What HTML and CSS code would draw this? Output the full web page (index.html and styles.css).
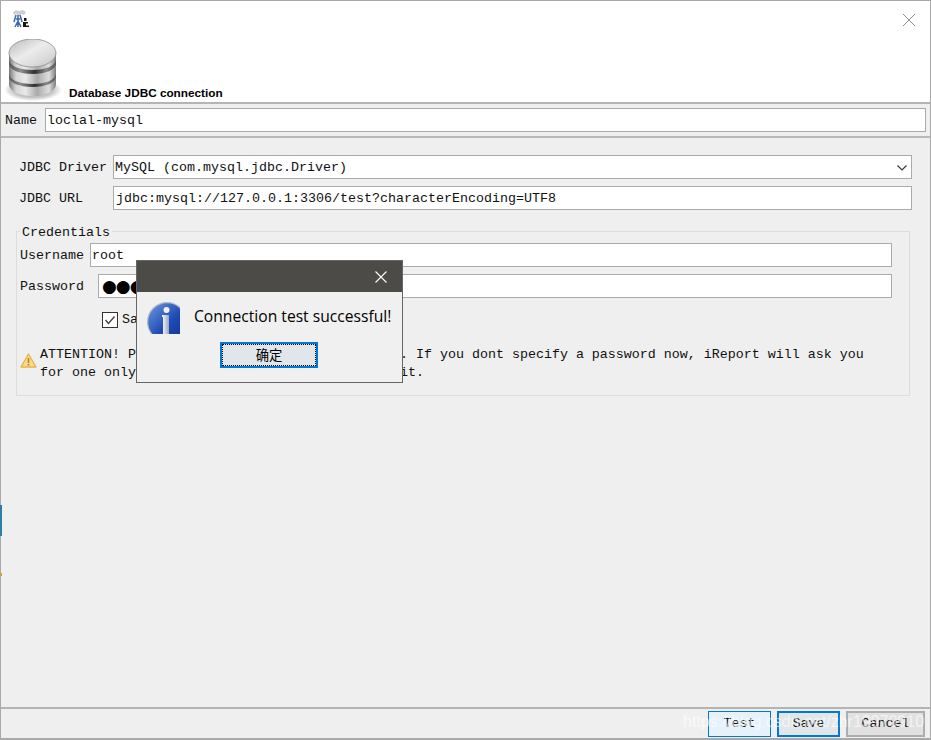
FILE: index.html
```html
<!DOCTYPE html>
<html lang="en">
<head>
<meta charset="utf-8">
<title>Database JDBC connection</title>
<link rel="stylesheet" href="styles.css">
</head>
<body>
<div class="window">
  <header class="header">
    <div class="title-row">
      <svg class="app-icon" width="17" height="18" viewBox="0 0 17 18">
        <path d="M1 2l3-2 3 1 4-1 3 2-2 3-3-1-2 2-3-2-2 1z" fill="#cfcfcf"/>
        <path d="M6 5v12M4 5l-2 7M8 5l2 7M4 9h4M6 11l-3 6M6 11l3 6" stroke="#3c68ad" stroke-width="1.5" fill="none"/>
        <path d="M12 8h2.500v3H12zM11 12h5v1.500h-2v2h3V17h-6z" fill="#161616"/>
      </svg>
      <svg class="close-icon" width="14" height="14" viewBox="0 0 14 14"><path d="M1 1l12 12M13 1L1 13" stroke="#8f8f8f" stroke-width="1" fill="none"/></svg>
    </div>
    <div class="banner">
      <svg class="db-icon" width="65" height="63" viewBox="0 0 65 63">
        <defs>
          <linearGradient id="side" x1="0" x2="1" y1="0" y2="0">
            <stop offset="0" stop-color="#777"/><stop offset="0.15" stop-color="#d6d6d6"/><stop offset="0.35" stop-color="#e9e9e9"/><stop offset="0.6" stop-color="#a9a9a9"/><stop offset="0.85" stop-color="#dedede"/><stop offset="1" stop-color="#7c7c7c"/>
          </linearGradient>
          <linearGradient id="gap" x1="0" x2="1" y1="0" y2="0">
            <stop offset="0" stop-color="#555"/><stop offset="0.25" stop-color="#8e8e8e"/><stop offset="0.55" stop-color="#2e2e33"/><stop offset="0.8" stop-color="#8a8a8a"/><stop offset="1" stop-color="#555"/>
          </linearGradient>
          <linearGradient id="top" x1="0" x2="1" y1="0" y2="1">
            <stop offset="0" stop-color="#b9b9b9"/><stop offset="0.45" stop-color="#ececec"/><stop offset="0.7" stop-color="#dcdcdc"/><stop offset="1" stop-color="#c2c2c2"/>
          </linearGradient>
          <radialGradient id="shadow"><stop offset="0" stop-color="#8a8a8a"/><stop offset="0.7" stop-color="#c8c8c8"/><stop offset="1" stop-color="#fff"/></radialGradient>
        </defs>
        <ellipse cx="29" cy="52" rx="29" ry="11" fill="url(#shadow)"/>
        <path d="M5 14v32c0 7 10.500 12 23.500 12S52 53 52 46V14z" fill="url(#side)"/>
        <path d="M5 21c0 7 10.500 11 23.500 11S52 28 52 21v4c0 7-10.500 11-23.500 11S5 32 5 25z" fill="url(#gap)"/>
        <path d="M5 35c0 7 10.500 11 23.500 11S52 42 52 35v3c0 7-10.500 11-23.500 11S5 45 5 38z" fill="url(#gap)"/>
        <ellipse cx="28.500" cy="15" rx="23.500" ry="14" fill="url(#top)" stroke="#8d8d8d" stroke-width="0.8"/>
      </svg>
      <span class="banner-title">Database JDBC connection</span>
    </div>
  </header>

  <div class="name-row">
    <label class="mono name-label">Name</label>
    <div class="field mono name-field">loclal-mysql</div>
  </div>

  <main class="content">
    <div class="form-row">
      <label class="mono driver-label">JDBC Driver</label>
      <div class="field mono select-field">
        <span>MySQL (com.mysql.jdbc.Driver)</span>
        <svg width="10" height="6" viewBox="0 0 10 6"><path d="M0.500 0.500l4.500 4.500 4.500-4.500" stroke="#333" stroke-width="1.100" fill="none"/></svg>
      </div>
    </div>
    <div class="form-row url-row">
      <label class="mono driver-label">JDBC URL</label>
      <div class="field mono url-field">jdbc:mysql://127.0.0.1:3306/test?characterEncoding=UTF8</div>
    </div>

    <section class="credentials">
      <span class="mono legend">Credentials</span>
      <div class="cred-row">
        <label class="mono user-label">Username</label>
        <div class="field mono">root</div>
      </div>
      <div class="cred-row pass-row">
        <label class="mono pass-label">Password</label>
        <div class="field dots">●●●●●</div>
      </div>
      <div class="check-row">
        <span class="checkbox">
          <svg width="14" height="14" viewBox="0 0 14 14"><path d="M2.500 7l3 3.500L11.500 3.500" stroke="#444" stroke-width="1.400" fill="none"/></svg>
        </span>
        <span class="mono">Save password</span>
      </div>
      <div class="warning">
        <svg class="warn-icon" width="17" height="15" viewBox="0 0 17 15">
          <path d="M8.500 1L16 14H1z" fill="#f8dc86" stroke="#e8b24a" stroke-width="1.300" stroke-linejoin="round"/>
          <path d="M8.500 5v5" stroke="#b0842a" stroke-width="1.600"/>
          <path d="M7.700 11h1.600v1.600H7.700z" fill="#b0842a"/>
        </svg>
        <p class="mono warn-text">ATTENTION! Passwords are stored in clear text. If you dont specify a password now, iReport will ask you<br>for one only when required and will not save it.</p>
      </div>
    </section>
  </main>

  <footer class="footer">
    <button class="btn mono btn-test">Test</button>
    <button class="btn mono btn-save">Save</button>
    <button class="btn mono btn-cancel">Cancel</button>
  </footer>
</div>

<span class="edge edge-blue"></span>
<span class="edge edge-orange"></span>

<div class="dialog">
  <div class="dialog-bar">
    <svg width="12" height="12" viewBox="0 0 12 12"><path d="M0.500 0.500l11 11M11.500 0.500l-11 11" stroke="#fff" stroke-width="1.100" fill="none"/></svg>
  </div>
  <div class="dialog-body">
    <div class="dialog-msg">
      <svg class="info-icon" width="33" height="32" viewBox="0 0 33 32">
        <defs>
          <linearGradient id="blue" x1="0" x2="1" y1="0" y2="1">
            <stop offset="0" stop-color="#6f9be0"/><stop offset="0.55" stop-color="#1f49b4"/><stop offset="1" stop-color="#10308f"/>
          </linearGradient>
          <linearGradient id="ibar" x1="0" x2="1" y1="0" y2="0">
            <stop offset="0" stop-color="#fff"/><stop offset="1" stop-color="#98a4c2"/>
          </linearGradient>
        </defs>
        <circle cx="20" cy="20" r="19.400" fill="url(#blue)" stroke="#b4bac6" stroke-width="1.200"/>
        <circle cx="19.500" cy="8" r="3" fill="#eef1f8"/>
        <path d="M15 13h7v19h-6V15h-1z" fill="url(#ibar)"/>
      </svg>
      <span class="dialog-text">Connection test successful!</span>
    </div>
    <button class="ok-btn"><span class="ok-inner">确定</span></button>
  </div>
</div>

<div class="watermark">https://blog.csdn.net/zhr19970910</div>
</body>
</html>
```
FILE: styles.css
```css
* { box-sizing: border-box; }
html, body { margin: 0; height: 100%; overflow: hidden; }
body { background: #efefef; color: #000; font-family: "Liberation Sans", sans-serif; }
.mono { font-family: "Liberation Mono", monospace; font-size: 13.33px; line-height: 16px; color: #111; }

.window { height: 740px; display: flex; flex-direction: column; border: 1px solid #a9a9a9; border-width: 1px 1px 2px 1px; background: #efefef; }

.header { height: 103px; background: #fff; border-bottom: 2px solid #b4b4b4; display: flex; flex-direction: column; flex: none; }
.title-row { height: 38px; display: flex; justify-content: space-between; padding: 9px 14px 0 11px; }
.app-icon { display: block; }
.close-icon { display: block; margin-top: 3px; }
.banner { display: flex; align-items: flex-end; height: 62px; padding-left: 3px; overflow: hidden; }
.db-icon { display: block; flex: none; }
.banner-title { font-size: 11.77px; font-weight: bold; line-height: 14px; margin-bottom: 1px; }

.name-row { height: 34px; flex: none; display: flex; align-items: center; padding: 0 4px; gap: 8px; border-bottom: 2px solid #b9b9b9; }
.name-label { flex: none; padding-top: 2px; }

.field { height: 24px; background: #fff; border: 1px solid #ababab; padding: 2px 1px 0; display: flex; align-items: center; flex: 1; min-width: 0; white-space: nowrap; overflow: hidden; }
.url-field { padding-left: 2px; }

.content { flex: 1; padding: 17px 18px 0 15px; }
.form-row { display: flex; align-items: center; padding-left: 3px; }
.driver-label { width: 94px; flex: none; padding-top: 2px; }
.url-row { margin-top: 7px; }
.select-field { justify-content: space-between; padding-right: 4px; }

.credentials { position: relative; margin: 21px 2px 0 0; height: 165px; border: 1px solid #ddd; padding: 11px 17px 0 3px; }
.legend { position: absolute; top: -8px; left: 3px; background: #efefef; padding: 1px 2px 0; }
.cred-row { display: flex; align-items: center; }
.user-label { width: 70px; flex: none; padding-top: 2px; }
.pass-label { width: 78px; flex: none; padding-top: 2px; }
.pass-row { margin-top: 7px; }
.dots { font-family: "DejaVu Sans", sans-serif; font-size: 17px; letter-spacing: -1px; padding: 0 1px 0 3px; }

.check-row { display: flex; align-items: center; gap: 4px; margin: 14px 0 0 82px; }
.checkbox { width: 16px; height: 16px; border: 1px solid #333; background: #fff; display: flex; align-items: center; justify-content: center; flex: none; }

.warning { display: flex; align-items: flex-start; margin-top: 18px; white-space: nowrap; }
.warn-icon { flex: none; margin: 7px 3px 0 0; }
.warn-text { margin: 0; line-height: 18px; }

.footer { height: 31px; flex: none; border-top: 2px solid #b4b4b4; display: flex; align-items: center; justify-content: flex-end; gap: 6px; padding: 1px 5px 0 0; }
.btn { height: 26px; padding: 0; }
.btn-test { width: 63px; background: #e5f1fb; border: 1px solid #0078d7; }
.btn-save { width: 63px; background: #e1e6ea; border: 2px solid #0078d7; }
.btn-cancel { width: 79px; background: #e1e1e1; border: 2px solid #adadad; }

.edge { position: absolute; left: 0; width: 2px; }
.edge-blue { top: 505px; height: 31px; background: #2a7fa8; }
.edge-orange { top: 573px; height: 3px; background: #c9a24a; }

.dialog { position: absolute; left: 136px; top: 260px; width: 267px; height: 123px; background: #f0f0f0; border: 1px solid #666; display: flex; flex-direction: column; }
.dialog-bar { height: 31px; flex: none; background: #4d4b47; display: flex; align-items: center; justify-content: flex-end; padding-right: 15px; }
.dialog-body { flex: 1; display: flex; flex-direction: column; align-items: flex-start; }
.dialog-msg { align-self: stretch; height: 50px; display: flex; align-items: flex-start; padding: 10px 0 0 10px; overflow: hidden; }
.info-icon { flex: none; margin-right: 14px; }
.dialog-text { font-family: "Open Sans", sans-serif; font-size: 15.65px; line-height: 30px; margin-top: -1px; white-space: nowrap; }
.ok-btn { width: 98px; height: 26px; margin-left: 83px; padding: 0; background: #e1e6ea; border: 2px solid #0078d7; display: flex; }
.ok-inner { flex: 1; border: 1px dotted #000; font-family: "Noto Sans CJK SC", sans-serif; font-size: 13.33px; line-height: 20px; color: #000; }

.watermark { position: absolute; left: 683px; top: 713px; font-size: 16px; line-height: 18px; color: rgba(255, 255, 255, 0.6); white-space: nowrap; }
```
